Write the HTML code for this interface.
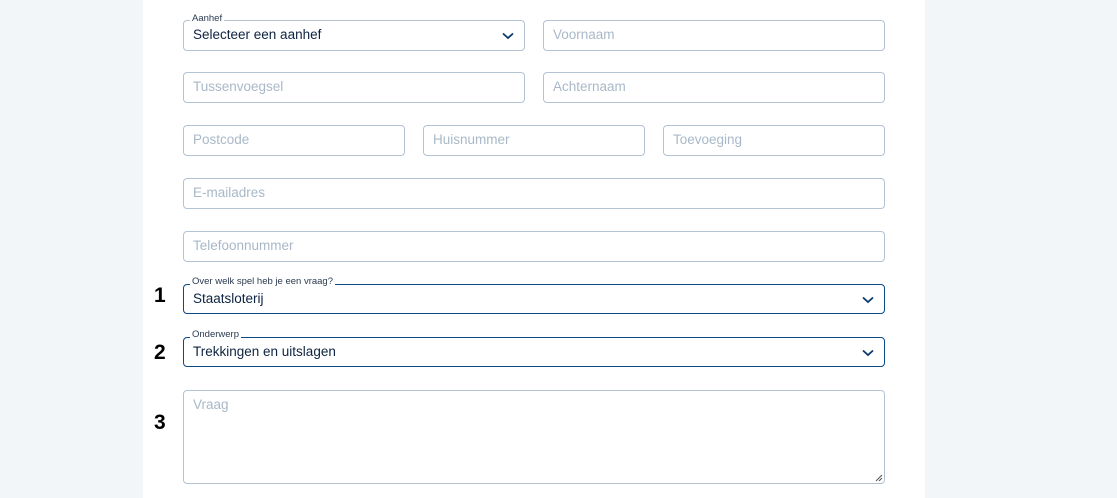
<!DOCTYPE html>
<html><head><style>
body{margin:0;width:1117px;height:498px;background:#f3f6f9;font-family:"Liberation Sans",sans-serif;position:relative;overflow:hidden}
.panel{position:absolute;left:143px;top:0;width:782px;height:498px;background:#fff}
.f{position:absolute;box-sizing:border-box;border:1px solid #b3c3d3;border-radius:4px;height:31px;background:#fff;font-size:13.5px;color:#a9b8c8;padding:0 0 0 9px;line-height:28px}
.f.d{border-color:#0a4a85;color:#0d2340}
.f.s{color:#0d2340}
.lab{position:absolute;top:-9px;left:6px;font-size:9.5px;line-height:12px;background:#fff;padding:0 2px;color:#2a3a50}
.ch{position:absolute;right:9px;top:10px}
.n{position:absolute;left:154px;font-size:21px;font-weight:bold;color:#000}
</style></head><body>
<div class="panel"></div>
<div class="f s" style="left:183px;top:20px;width:342px">Selecteer een aanhef<span class="lab" style="top:-8px">Aanhef</span><svg class="ch" width="14" height="10" viewBox="0 0 14 10"><path d="M2 2.5L7 7L12 2.5" fill="none" stroke="#0a3a6b" stroke-width="1.8"/></svg></div>
<div class="f" style="left:543px;top:20px;width:342px">Voornaam</div>
<div class="f" style="left:183px;top:72px;width:342px">Tussenvoegsel</div>
<div class="f" style="left:543px;top:72px;width:342px">Achternaam</div>
<div class="f" style="left:183px;top:125px;width:222px">Postcode</div>
<div class="f" style="left:423px;top:125px;width:222px">Huisnummer</div>
<div class="f" style="left:663px;top:125px;width:222px">Toevoeging</div>
<div class="f" style="left:183px;top:178px;width:702px">E-mailadres</div>
<div class="f" style="left:183px;top:231px;width:702px">Telefoonnummer</div>
<div class="n" style="top:284px">1</div>
<div class="f d" style="left:183px;top:284px;width:702px;height:30px">Staatsloterij<span class="lab">Over welk spel heb je een vraag?</span><svg class="ch" width="14" height="10" viewBox="0 0 14 10"><path d="M2 2.5L7 7L12 2.5" fill="none" stroke="#0a3a6b" stroke-width="1.8"/></svg></div>
<div class="n" style="top:341px">2</div>
<div class="f d" style="left:183px;top:337px;width:702px;height:30px">Trekkingen en uitslagen<span class="lab">Onderwerp</span><svg class="ch" width="14" height="10" viewBox="0 0 14 10"><path d="M2 2.5L7 7L12 2.5" fill="none" stroke="#0a3a6b" stroke-width="1.8"/></svg></div>
<div class="n" style="top:411px">3</div>
<div class="f" style="left:183px;top:390px;width:702px;height:94px;line-height:28px">Vraag<svg style="position:absolute;right:1px;bottom:1px" width="8" height="8"><path d="M1 7L7 1M4 7L7 4" stroke="#555" stroke-width="1"/></svg></div>
</body></html>
